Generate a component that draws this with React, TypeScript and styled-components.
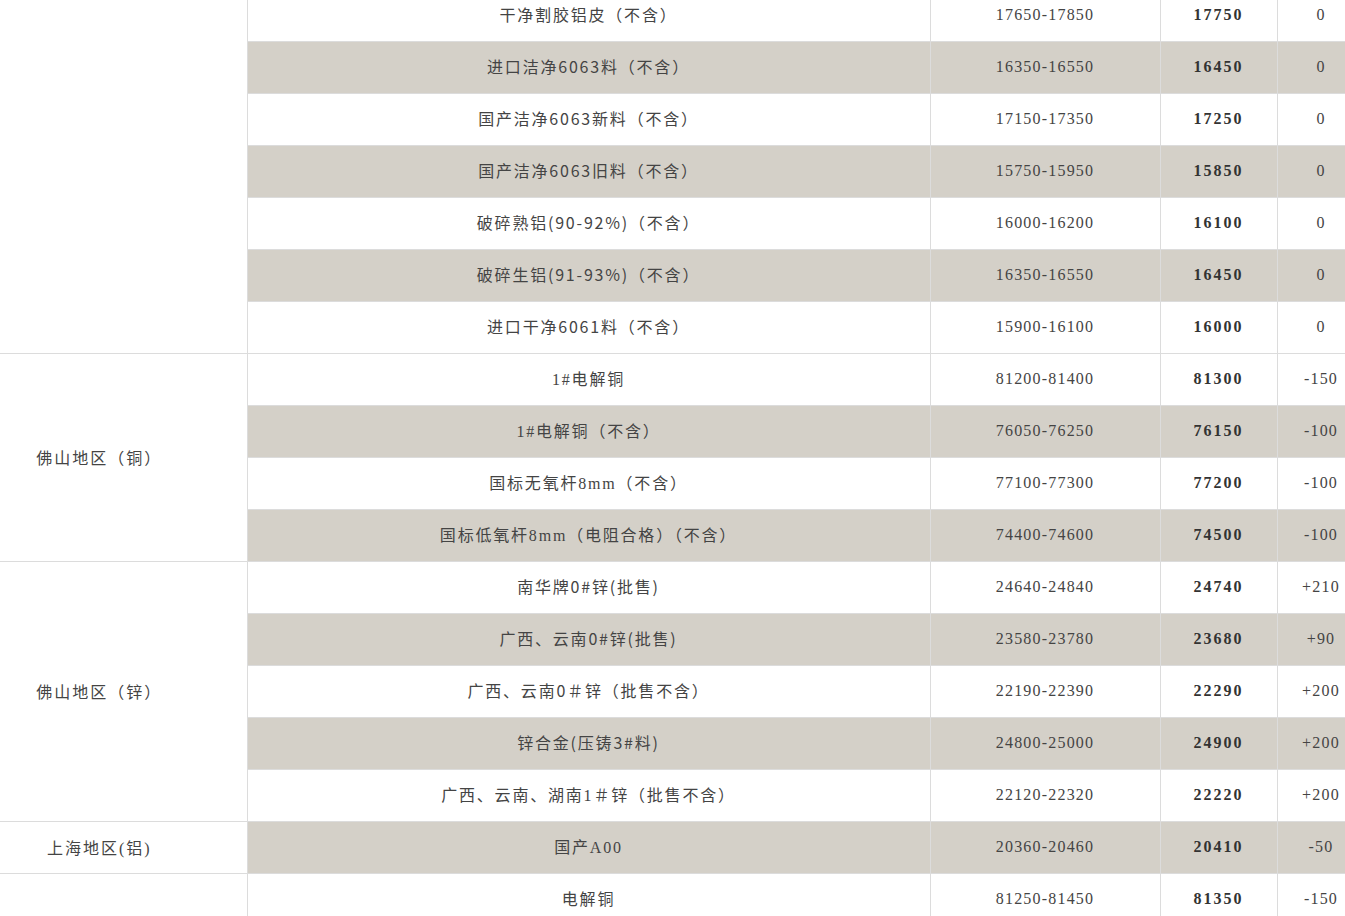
import styled, { createGlobalStyle } from 'styled-components'

const Global = createGlobalStyle`
  html, body {
    margin: 0;
    padding: 0;
    background: #fff;
    overflow: hidden;
  }
`

const Viewport = styled.div`
  width: 1345px;
  height: 916px;
  overflow: hidden;
`

const PriceTable = styled.table`
  margin-top: -11px;
  width: 1365px;
  table-layout: fixed;
  border-collapse: collapse;
  font-family: "Liberation Serif", "Noto Sans CJK SC", serif;
  font-size: 16px;
  letter-spacing: 1.2px;
  color: #444;
`

const Col = styled.col<{ $w: number }>`
  width: ${p => p.$w}px;
`

const Row = styled.tr<{ $shaded: boolean }>`
  td.item {
    background: ${p => (p.$shaded ? '#d4d0c8' : '#fff')};
  }
`

const Cell = styled.td`
  height: 47px;
  padding: 1px 0 3px;
  border: 1px solid #dcdcdc;
  text-align: center;
  vertical-align: middle;
  white-space: nowrap;
`

const RegionCell = styled(Cell)`
  background: #fff;
  padding-right: 48px;
  border-left: none;
  letter-spacing: 2px;
`

const NameCell = styled(Cell)<{ $sans?: boolean }>`
  letter-spacing: 1.8px;
  padding: 0 0 4px;
  font-family: ${p =>
    p.$sans
      ? '"Noto Sans CJK SC", sans-serif'
      : '"Liberation Serif", "Noto Sans CJK SC", serif'};
`

const PriceCell = styled(Cell)`
  font-weight: 700;
  letter-spacing: 2px;
  color: #333;
`

type Item = { name: string; range: string; avg: string; change: string; sans?: boolean }
type Region = { label: string; startShaded?: boolean; items: Item[] }

const regions: Region[] = [
  {
    label: '',
    items: [
      { name: '干净割胶铝皮（不含）', range: '17650-17850', avg: '17750', change: '0', sans: true },
      { name: '进口洁净6063料（不含）', range: '16350-16550', avg: '16450', change: '0', sans: true },
      { name: '国产洁净6063新料（不含）', range: '17150-17350', avg: '17250', change: '0', sans: true },
      { name: '国产洁净6063旧料（不含）', range: '15750-15950', avg: '15850', change: '0', sans: true },
      { name: '破碎熟铝(90-92%)（不含）', range: '16000-16200', avg: '16100', change: '0', sans: true },
      { name: '破碎生铝(91-93%)（不含）', range: '16350-16550', avg: '16450', change: '0', sans: true },
      { name: '进口干净6061料（不含）', range: '15900-16100', avg: '16000', change: '0', sans: true },
    ],
  },
  {
    label: '佛山地区（铜）',
    items: [
      { name: '1#电解铜', range: '81200-81400', avg: '81300', change: '-150' },
      { name: '1#电解铜（不含）', range: '76050-76250', avg: '76150', change: '-100' },
      { name: '国标无氧杆8mm（不含）', range: '77100-77300', avg: '77200', change: '-100' },
      { name: '国标低氧杆8mm（电阻合格）（不含）', range: '74400-74600', avg: '74500', change: '-100' },
    ],
  },
  {
    label: '佛山地区（锌）',
    items: [
      { name: '南华牌0#锌(批售)', range: '24640-24840', avg: '24740', change: '+210', sans: true },
      { name: '广西、云南0#锌(批售)', range: '23580-23780', avg: '23680', change: '+90', sans: true },
      { name: '广西、云南0＃锌（批售不含）', range: '22190-22390', avg: '22290', change: '+200', sans: true },
      { name: '锌合金(压铸3#料)', range: '24800-25000', avg: '24900', change: '+200', sans: true },
      { name: '广西、云南、湖南1＃锌（批售不含）', range: '22120-22320', avg: '22220', change: '+200' },
    ],
  },
  {
    label: '上海地区(铝)',
    startShaded: true,
    items: [{ name: '国产A00', range: '20360-20460', avg: '20410', change: '-50' }],
  },
  {
    label: '',
    items: [{ name: '电解铜', range: '81250-81450', avg: '81350', change: '-150' }],
  },
]

export default function App() {
  return (
    <Viewport>
      <Global />
      <PriceTable>
        <colgroup>
          <Col $w={247} />
          <Col $w={683} />
          <Col $w={230} />
          <Col $w={117} />
          <Col $w={88} />
        </colgroup>
        <tbody>
          {regions.map((region, r) =>
            region.items.map((item, i) => {
              const shaded = (i % 2 === 1) !== !!region.startShaded
              return (
                <Row key={`${r}-${i}`} $shaded={shaded}>
                  {i === 0 && (
                    <RegionCell rowSpan={region.items.length}>{region.label}</RegionCell>
                  )}
                  <NameCell className="item" $sans={item.sans}>
                    {item.name}
                  </NameCell>
                  <Cell className="item">{item.range}</Cell>
                  <PriceCell className="item">{item.avg}</PriceCell>
                  <Cell className="item">{item.change}</Cell>
                </Row>
              )
            })
          )}
        </tbody>
      </PriceTable>
    </Viewport>
  )
}
